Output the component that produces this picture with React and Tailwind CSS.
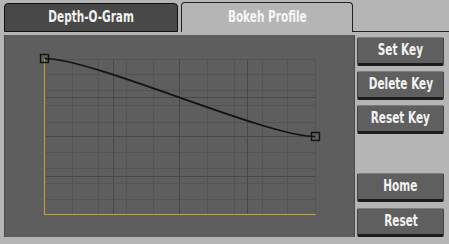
import React from "react";

const font = { fontFamily: '"DejaVu Sans", sans-serif' };

const vLight = [72, 98, 126, 153, 207, 234, 262, 287, 315];
const vDark = [113, 179, 247];
const hLight = [59, 74, 90, 105, 122, 152, 168, 183, 199];
const hDark = [97, 136, 176];

// the UI font is a narrow one, squeeze DejaVu to match
const Label = ({ children }) => (
  <span className="inline-block whitespace-nowrap text-[15px] font-bold scale-x-[0.7]">{children}</span>
);

const Button = ({ label, className = "" }) => (
  <div
    className={`h-[29px] w-[87px] flex items-center justify-center bg-[#5f5f5f] border border-[#444] border-t-[#7d7d7d] border-b-[3px] border-b-[#1c1c1c] rounded-[2px] text-[#f2f2f2] ${className}`}
  >
    <Label>{label}</Label>
  </div>
);

const Graph = () => (
  <svg width="351" height="202" viewBox="4 35 351 202" className="block">
    <line x1={4.5} y1={35} x2={4.5} y2={237} stroke="#4a4a4a" strokeWidth="1" />
    <line x1={354.5} y1={35} x2={354.5} y2={237} stroke="#4a4a4a" strokeWidth="1" />
    {vLight.map((x) => (
      <line key={"vl" + x} x1={x + 0.5} y1={59} x2={x + 0.5} y2={214} stroke="#545454" strokeWidth="1" />
    ))}
    {hLight.map((y) => (
      <line key={"hl" + y} x1={44} y1={y + 0.5} x2={315.5} y2={y + 0.5} stroke="#545454" strokeWidth="1" />
    ))}
    {vDark.map((x) => (
      <line key={"vd" + x} x1={x + 0.5} y1={59} x2={x + 0.5} y2={214} stroke="#484848" strokeWidth="1" />
    ))}
    {hDark.map((y) => (
      <line key={"hd" + y} x1={44} y1={y + 0.5} x2={315.5} y2={y + 0.5} stroke="#484848" strokeWidth="1" />
    ))}
    <line x1={45.5} y1={60} x2={45.5} y2={213} stroke="#5c5c74" strokeWidth="1" />
    <line x1={44.5} y1={58} x2={44.5} y2={214.5} stroke="#c9a227" strokeWidth="1" />
    <line x1={44} y1={214.5} x2={316} y2={214.5} stroke="#c9a227" strokeWidth="1" />
    <path d="M44.5,58.5 C94,58.5 265,136.5 315,136.5" fill="none" stroke="#121212" strokeWidth="1.7" />
    <rect x={40.5} y={54.5} width={8} height={8} fill="none" stroke="#121212" strokeWidth="1.4" />
    <rect x={311.5} y={132.5} width={8} height={8} fill="none" stroke="#121212" strokeWidth="1.4" />
  </svg>
);

export default function App() {
  return (
    <div className="w-[449px] h-[244px] bg-[#b5b5b5] overflow-hidden" style={font}>
      {/* tabs */}
      <div className="flex h-[32px]">
        <div className="ml-[4px] mt-[3px] w-[174px] h-[29px] flex items-center justify-center bg-[#484848] border border-[#111] rounded-t-[4px] text-[#f2f2f2]">
          <Label>Depth-O-Gram</Label>
        </div>
        <div className="ml-[3px] mt-[2px] w-[172px] h-[30px] flex items-center justify-center border-l border-t border-r border-[#222] rounded-t-[4px] text-[#f6f6f6]">
          <Label>Bokeh Profile</Label>
        </div>
        <div className="flex-1 border-b border-[#222]" />
      </div>

      {/* body */}
      <div className="flex mt-[3px]">
        <div className="ml-[4px] w-[351px] h-[202px] bg-[#5e5e5e]">
          <Graph />
        </div>
        <div className="ml-[2px] flex flex-col">
          <Button label="Set Key" className="mt-[2px]" />
          <Button label="Delete Key" className="mt-[5px]" />
          <Button label="Reset Key" className="mt-[5px]" />
          <Button label="Home" className="mt-[39px]" />
          <Button label="Reset" className="mt-[6px]" />
        </div>
      </div>
    </div>
  );
}
